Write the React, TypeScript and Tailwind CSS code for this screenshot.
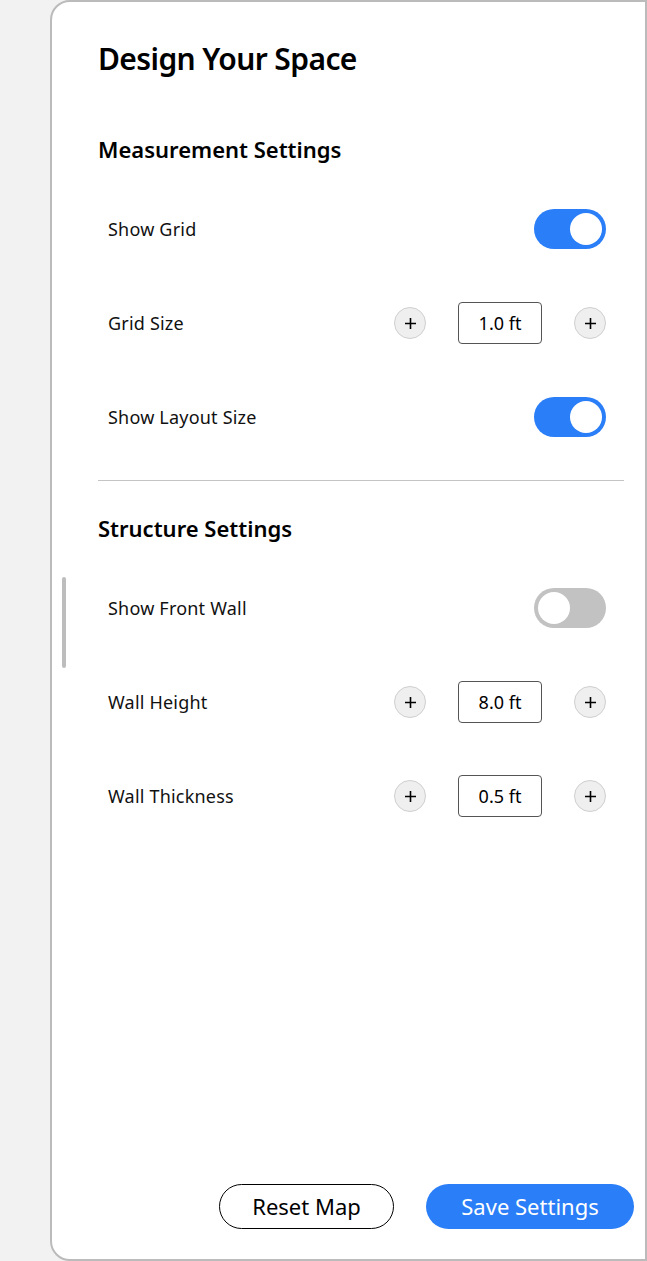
import { useState } from "react";

type Stepper = { label: string; value: number };

const FONT = { fontFamily: '"Noto Sans", "Open Sans", sans-serif' };

function Toggle({ on, onChange }: { on: boolean; onChange: () => void }) {
  return (
    <button
      onClick={onChange}
      className={`flex h-[40px] w-[72px] items-center rounded-full px-[4px] ${
        on ? "justify-end bg-[#2a7ef8]" : "justify-start bg-[#c2c2c2]"
      }`}
    >
      <span className="h-[32px] w-[32px] rounded-full bg-white" />
    </button>
  );
}

function Plus({ onClick }: { onClick: () => void }) {
  return (
    <button
      onClick={onClick}
      className="flex h-[32px] w-[32px] items-center justify-center rounded-full border border-[#cfcfcf] bg-[#efefef] text-black"
    >
      <svg width="13" height="13" viewBox="0 0 13 13">
        <path d="M6.5 1v11M1 6.5h11" stroke="currentColor" strokeWidth="1.6" />
      </svg>
    </button>
  );
}

function Row({ label, children }: { label: string; children: React.ReactNode }) {
  return (
    <div className="flex h-[94px] items-center justify-between pl-[10px] pr-[18px]">
      <span className="text-[18px] tracking-[0.2px] text-[#111]">{label}</span>
      {children}
    </div>
  );
}

function StepRow({ item, onStep }: { item: Stepper; onStep: (d: number) => void }) {
  return (
    <Row label={item.label}>
      <div className="flex items-center gap-[32px]">
        <Plus onClick={() => onStep(-1)} />
        <div className="flex h-[42px] w-[84px] items-center justify-center rounded-[4px] border border-[#555] text-[18px] text-black">
          {item.value.toFixed(1)} ft
        </div>
        <Plus onClick={() => onStep(1)} />
      </div>
    </Row>
  );
}

export default function App() {
  const [showGrid, setShowGrid] = useState(true);
  const [showLayout, setShowLayout] = useState(true);
  const [frontWall, setFrontWall] = useState(false);
  const [grid, setGrid] = useState(1.0);
  const [height, setHeight] = useState(8.0);
  const [thick, setThick] = useState(0.5);

  return (
    <div className="flex h-[1261px] bg-[#f2f2f2] pl-[50px]" style={FONT}>
      <div className="relative flex flex-1 flex-col rounded-l-[20px] border-2 border-[#bbbbbb] bg-white pb-[30px] pl-[46px] pr-[11px] pt-[37px]">
        {/* fake scroll thumb */}
        <div className="absolute left-[10px] top-[575px] h-[91px] w-[4px] rounded-full bg-[#bdbdbd]" />

        <div className="mr-[10px]">
          <h1 className="text-[30px] font-semibold leading-[40px] tracking-[-0.6px] text-black">
            Design Your Space
          </h1>

          <h2 className="mt-[55px] text-[22px] font-semibold leading-[30px] text-black">
            Measurement Settings
          </h2>
          <div className="mt-[18px]">
            <Row label="Show Grid">
              <Toggle on={showGrid} onChange={() => setShowGrid(!showGrid)} />
            </Row>
            <StepRow
              item={{ label: "Grid Size", value: grid }}
              onStep={(d) => setGrid(Math.max(0.5, grid + d * 0.5))}
            />
            <Row label="Show Layout Size">
              <Toggle on={showLayout} onChange={() => setShowLayout(!showLayout)} />
            </Row>
          </div>

          <div className="mt-[16px] h-px bg-[#c4c4c4]" />

          <h2 className="mt-[32px] text-[22px] font-semibold leading-[30px] text-black">
            Structure Settings
          </h2>
          <div className="mt-[18px]">
            <Row label="Show Front Wall">
              <Toggle on={frontWall} onChange={() => setFrontWall(!frontWall)} />
            </Row>
            <StepRow
              item={{ label: "Wall Height", value: height }}
              onStep={(d) => setHeight(Math.max(1, height + d * 0.5))}
            />
            <StepRow
              item={{ label: "Wall Thickness", value: thick }}
              onStep={(d) => setThick(Math.max(0.5, thick + d * 0.5))}
            />
          </div>
        </div>

        <div className="mt-auto flex justify-end gap-[32px]">
          <button className="h-[45px] w-[175px] rounded-full border border-black text-[22px] text-black">
            Reset Map
          </button>
          <button className="h-[45px] w-[208px] rounded-full bg-[#2a7ef8] text-[22px] text-white">
            Save Settings
          </button>
        </div>
      </div>
    </div>
  );
}
